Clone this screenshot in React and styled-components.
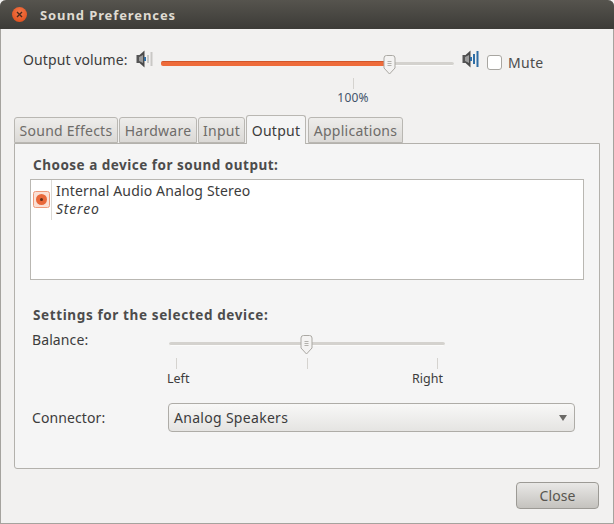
import React from "react";
import styled, { createGlobalStyle } from "styled-components";

const Global = createGlobalStyle`
  html, body { margin: 0; padding: 0; background: #f2f1f0; }
  body { width: 614px; height: 524px; overflow: hidden; font-family: "Noto Sans", "Open Sans", sans-serif; font-size: 14px; color: #3c3c3c; letter-spacing: 0.1px; }
  * { box-sizing: border-box; }
`;

const Window = styled.div`
  width: 614px;
  height: 524px;
  display: flex;
  flex-direction: column;
  background: #f2f1f0;
  border: 1px solid #a5a39e;
  border-top: none;
  border-radius: 6px 6px 0 0;
`;

const TitleBar = styled.div`
  height: 29px;
  margin: 0 -1px;
  flex: none;
  display: flex;
  align-items: center;
  gap: 13px;
  padding-left: 12px;
  background: linear-gradient(#56544e, #3c3b37);
  border-radius: 6px 6px 0 0;
`;

const CloseDot = styled.div`
  width: 15px;
  height: 15px;
  border-radius: 50%;
  background: radial-gradient(circle at 50% 35%, #f4784a, #dd4814);
  display: flex;
  align-items: center;
  justify-content: center;
  svg { display: block; }
`;

const Title = styled.div`
  color: #dfdbd2;
  font-weight: 700;
  font-size: 13px;
  letter-spacing: 0.9px;
`;

const VolumeRow = styled.div`
  height: 85px;
  flex: none;
  display: flex;
  align-items: flex-start;
  padding: 21px 0 0 22px;
`;

const VolumeLabel = styled.div`
  width: 113px;
  height: 20px;
  line-height: 20px;
  white-space: nowrap;
`;

const VolumeSlider = styled.div`
  width: 293px;
  margin: 0 8px;
`;

const Track = styled.div`
  position: relative;
  height: 20px;
  margin: ${({ $top }) => $top}px 0 0 ${({ $inset }) => $inset || 0}px;
  width: ${({ $width }) => $width || 293}px;
`;

const Groove = styled.div`
  position: absolute;
  left: 0;
  right: 0;
  top: 7px;
  height: 4px;
  border-radius: 2px;
  background: #d4d2ce;
  border-bottom: 1px solid #fbfbfa;
`;

const Fill = styled.div`
  position: absolute;
  left: 0;
  top: 6px;
  height: 5px;
  border-radius: 2px;
  background: #ee6b3a;
  border-top: 1px solid #d2562a;
`;

const Thumb = styled.svg`
  position: absolute;
  top: 0;
  display: block;
`;

const Tick = styled.div`
  width: 1px;
  height: 11px;
  background: #d5d3cf;
`;

const CenteredScale = styled.div`
  height: 40px;
  display: flex;
  flex-direction: column;
  align-items: center;
  margin-top: 3px;
  padding-left: 91px;
`;

const ScaleText = styled.div`
  font-size: ${({ $blue }) => ($blue ? "12px" : "12.5px")};
  line-height: 16px;
  color: ${({ $blue }) => ($blue ? "#43536a" : "#3c3c3c")};
  margin-top: ${({ $blue }) => ($blue ? "1px" : "0")};
  letter-spacing: ${({ $blue }) => ($blue ? "0.2px" : "0")};
`;

const SpeakerWrap = styled.svg`
  flex: none;
  display: block;
`;

const Checkbox = styled.div`
  width: 15px;
  height: 15px;
  flex: none;
  margin: 5px 6px 0 8px;
  background: #fff;
  border: 1px solid #a8a6a1;
  border-radius: 3px;
`;

const MuteLabel = styled.div`
  line-height: 20px;
  margin-top: 3px;
  color: #4c4c4c;
  letter-spacing: 0.3px;
`;

const Notebook = styled.div`
  margin: 0 13px;
  flex: none;
`;

const TabBar = styled.div`
  height: 29px;
  display: flex;
  align-items: flex-end;
  gap: 1px;
`;

const Tab = styled.div`
  width: ${({ $w }) => $w}px;
  height: ${({ $active }) => ($active ? 29 : 26)}px;
  margin-bottom: ${({ $active }) => ($active ? -1 : 0)}px;
  margin-right: ${({ $active }) => ($active ? 1 : 0)}px;
  display: flex;
  align-items: center;
  justify-content: center;
  position: relative;
  border: 1px solid #b9b7b2;
  border-bottom: ${({ $active }) => ($active ? "none" : "1px solid #b9b7b2")};
  border-radius: 3px 3px 0 0;
  background: ${({ $active }) => ($active ? "#f5f5f5" : "linear-gradient(#eeedeb, #dbd9d6)")};
  color: ${({ $active }) => ($active ? "#3c3c3c" : "#6e6c69")};
  letter-spacing: 0.25px;
`;

const Panel = styled.div`
  height: 326px;
  padding: 11px 15px 0 15px;
  background: #f5f5f5;
  border: 1px solid #b3b1ac;
  border-radius: 0 0 3px 3px;
`;

const Heading = styled.div`
  height: 20px;
  line-height: 20px;
  padding-left: 3px;
  font-weight: 700;
  font-size: 13.5px;
  color: #4c4c4c;
  letter-spacing: 0.5px;
`;

const DeviceList = styled.div`
  height: 101px;
  margin-top: 4px;
  display: flex;
  align-items: flex-start;
  background: #fff;
  border: 1px solid #b9b7b2;
`;

const DeviceIconCell = styled.div`
  width: 21px;
  height: 40px;
  flex: none;
  padding: 11px 0 0 2px;
  border-right: 1px solid #dcdad6;
  svg { display: block; }
`;

const DeviceText = styled.div`
  padding: 2px 0 0 4px;
  line-height: 18px;
  letter-spacing: 0.15px;
`;

const DeviceStyle = styled.div`
  font-style: italic;
  line-height: 17px;
  letter-spacing: 0.8px;
`;

const BalanceHeading = styled(Heading)`
  margin-top: 25px;
  letter-spacing: 0.62px;
`;

const FormRow = styled.div`
  display: flex;
  align-items: ${({ $center }) => ($center ? "center" : "flex-start")};
  height: ${({ $h }) => $h}px;
  margin-top: ${({ $mt }) => $mt || 0}px;
`;

const FormLabel = styled.div`
  width: 137px;
  padding-left: 2px;
  flex: none;
  line-height: 18px;
  margin-top: ${({ $mt }) => $mt || 0}px;
`;

const BalanceSlider = styled.div`
  width: 280px;
`;

const Ticks = styled.div`
  display: flex;
  justify-content: space-between;
  padding: 0 9px;
  margin-top: 3px;
`;

const BalanceLabels = styled.div`
  display: flex;
  justify-content: space-between;
  margin-top: 2px;
  padding-right: 4px;
`;

const Combo = styled.div`
  width: 407px;
  height: 29px;
  margin-left: 1px;
  display: flex;
  align-items: center;
  justify-content: space-between;
  padding: 0 7px 0 5px;
  border: 1px solid #aeaca7;
  border-radius: 4px;
  background: linear-gradient(#f8f8f7, #e5e4e2);
  letter-spacing: 0.3px;
`;

const Arrow = styled.div`
  width: 0;
  height: 0;
  border-left: 4px solid transparent;
  border-right: 4px solid transparent;
  border-top: 6px solid #6b6966;
`;

const Footer = styled.div`
  flex: 1;
  display: flex;
  justify-content: flex-end;
  align-items: flex-start;
  padding: 13px 14px 0 0;
`;

const CloseButton = styled.div`
  width: 83px;
  height: 27px;
  display: flex;
  align-items: center;
  justify-content: center;
  color: #57554f;
  font-size: 14px;
  border: 1px solid #9c9a95;
  border-radius: 4px;
  background: linear-gradient(#e9e8e6, #c4c2be);
`;

const Speaker = ({ high }) => (
  <SpeakerWrap width="17" height="18" viewBox="0 0 17 18">
    <rect x="0.5" y="5" width="3" height="8" fill="#555" />
    <path d="M3 5.5 L8.5 0.5 V17.5 L3 12.5 Z" fill="#4a4a4a" />
    <path d="M3 7 L7 5 V13 L3 11 Z" fill="#9b9b9b" />
    <rect x="8" y="7" width="2" height="4" fill="#2f6ea5" />
    <rect x="11" y={high ? 4 : 5} width="2" height={high ? 10 : 8} fill={high ? "#2f6ea5" : "#c9c8c5"} />
    <rect x="14.5" y={high ? 1 : 2} width="2" height={high ? 16 : 14} fill={high ? "#2f6ea5" : "#c9c8c5"} />
  </SpeakerWrap>
);

const SliderThumb = ({ left }) => (
  <Thumb style={{ left }} width="13" height="20" viewBox="0 0 13 20">
    <path d="M1 3 Q1 0.5 3.5 0.5 H9.5 Q12 0.5 12 3 V13 L6.5 19 L1 13 Z" fill="#f4f3f2" stroke="#aaa8a3" />
    <path d="M4.5 6.5 H8.5 M4.5 8.5 H8.5 M4.5 10.5 H8.5" stroke="#b3b1ac" />
  </Thumb>
);

export default function App() {
  return (
    <Window>
      <Global />
      <TitleBar>
        <CloseDot>
          <svg width="7" height="7" viewBox="0 0 7 7">
            <path d="M1 1 L6 6 M6 1 L1 6" stroke="#4a2a1c" strokeWidth="1.4" />
          </svg>
        </CloseDot>
        <Title>Sound Preferences</Title>
      </TitleBar>

      <VolumeRow>
        <VolumeLabel>Output volume:</VolumeLabel>
        <Speaker />
        <VolumeSlider>
          <Track $top={5}>
            <Groove />
            <Fill style={{ width: 226 }} />
            <SliderThumb left={222} />
          </Track>
          <CenteredScale>
            <Tick />
            <ScaleText $blue>100%</ScaleText>
          </CenteredScale>
        </VolumeSlider>
        <Speaker high />
        <Checkbox />
        <MuteLabel>Mute</MuteLabel>
      </VolumeRow>

      <Notebook>
        <TabBar>
          <Tab $w={104}>Sound Effects</Tab>
          <Tab $w={78}>Hardware</Tab>
          <Tab $w={47}>Input</Tab>
          <Tab $w={60} $active>Output</Tab>
          <Tab $w={95}>Applications</Tab>
        </TabBar>
        <Panel>
          <Heading>Choose a device for sound output:</Heading>
          <DeviceList>
            <DeviceIconCell>
              <svg width="17" height="17" viewBox="0 0 17 17">
                <rect x="0.5" y="0.5" width="16" height="16" rx="2" fill="#fbe0d5" stroke="#ef9a7a" />
                <circle cx="8.5" cy="8.5" r="5.5" fill="#e9683a" />
                <circle cx="8.5" cy="8.5" r="1.5" fill="#5a2c1a" />
              </svg>
            </DeviceIconCell>
            <DeviceText>
              Internal Audio Analog Stereo
              <DeviceStyle>Stereo</DeviceStyle>
            </DeviceText>
          </DeviceList>

          <BalanceHeading>Settings for the selected device:</BalanceHeading>
          <FormRow $h={64}>
            <FormLabel $mt={6}>Balance:</FormLabel>
            <BalanceSlider>
              <Track $top={10} $inset={2} $width={276}>
                <Groove />
                <SliderThumb left={131} />
              </Track>
              <Ticks>
                <Tick />
                <Tick />
                <Tick />
              </Ticks>
              <BalanceLabels>
                <ScaleText>Left</ScaleText>
                <ScaleText>Right</ScaleText>
              </BalanceLabels>
            </BalanceSlider>
          </FormRow>
          <FormRow $h={29} $mt={14} $center>
            <FormLabel>Connector:</FormLabel>
            <Combo>
              Analog Speakers
              <Arrow />
            </Combo>
          </FormRow>
        </Panel>
      </Notebook>

      <Footer>
        <CloseButton>Close</CloseButton>
      </Footer>
    </Window>
  );
}
